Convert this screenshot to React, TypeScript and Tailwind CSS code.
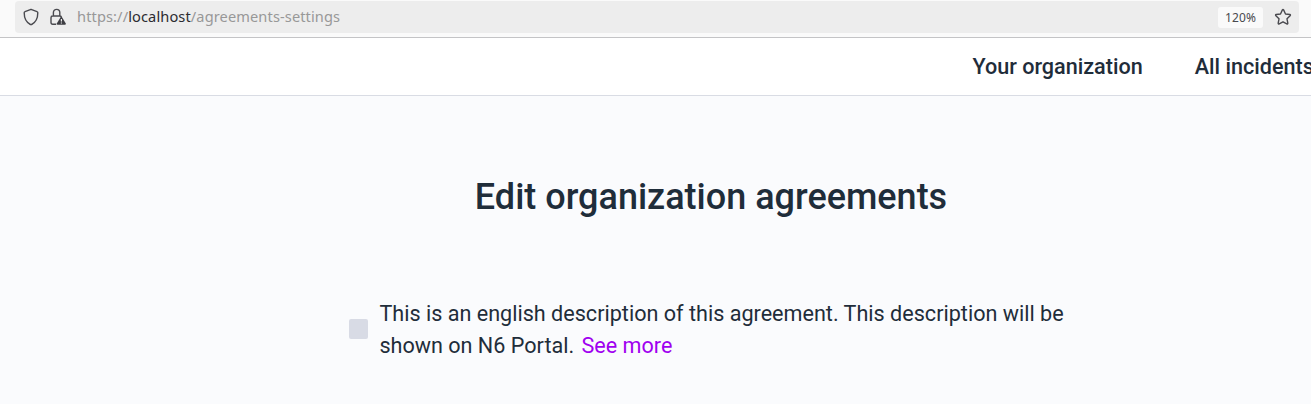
import React from "react";

function ShieldIcon() {
  return (
    <svg width="16" height="18" viewBox="0 0 16 18" fill="none" stroke="#4a4a4f" strokeWidth="1.4" strokeLinejoin="round">
      <path d="M8 1.3 L14 3.6 C14.6 3.8 14.8 4.2 14.8 4.8 C14.8 10.2 12.6 14.5 8.6 16.5 Q8 16.8 7.4 16.5 C3.4 14.5 1.2 10.2 1.2 4.8 C1.2 4.2 1.4 3.8 2 3.6 Z" />
    </svg>
  );
}

function LockWarningIcon() {
  return (
    <svg width="16" height="18" viewBox="0 0 16 18" fill="none">
      <path
        d="M3.4 8 V4.6 a3.2 3.2 0 0 1 6.4 0 V8 M6.2 16.2 H2.7 Q1 16.2 1 14.5 V9.7 Q1 8 2.7 8 H9.8 Q11 8 11.4 9"
        stroke="#4a4a4f"
        strokeWidth="1.4"
      />
      <path
        d="M10.7 9 Q11.3 8.3 11.9 9 L15.8 15.4 Q16 16.8 14.9 16.8 H7.7 Q6.6 16.8 6.8 15.4 Z"
        fill="#3e3e43"
      />
      <path d="M11.4 11 V13.6 M11.4 14.5 V15.6" stroke="#ededed" strokeWidth="1.2" />
    </svg>
  );
}

function StarIcon() {
  return (
    <svg width="18" height="18" viewBox="0 0 18 18" fill="none" stroke="#4a4a4f" strokeWidth="1.4" strokeLinejoin="round">
      <path d="M8.4 1.9 Q9 0.9 9.6 1.9 L11.5 6 L15.8 6.5 Q16.9 6.8 16.1 7.7 L13 10.8 L13.8 15.2 Q13.8 16.4 12.8 15.9 L9 13.8 L5.2 15.9 Q4.2 16.4 4.2 15.2 L5 10.8 L1.9 7.7 Q1.1 6.8 2.2 6.5 L6.5 6 Z" />
    </svg>
  );
}

function AddressBar() {
  return (
    <div className="h-[38px] border-b border-[#c4c4c6] bg-[#fafafa] pt-px pr-3 pl-[15px]">
      <div className="flex h-8 items-center rounded-[4px] bg-[#ededed] pr-[7px] pl-2">
        <ShieldIcon />
        <span className="ml-[11px] flex">
          <LockWarningIcon />
        </span>
        <div className="mb-0.5 ml-[11px] font-['Noto_Sans','Open_Sans',sans-serif] text-[14.6px] leading-[30px] tracking-[0.11px] whitespace-nowrap text-[#989898]">
          https://<span className="text-[#2b2b30]">localhost</span>/agreements-settings
        </div>
        <span className="ml-auto flex h-[21px] w-[45px] items-center justify-center rounded-[3px] bg-[#fafafa] pt-px font-['Noto_Sans','Open_Sans',sans-serif] text-[12px] tracking-[0.1px] text-[#4a4a4f]">
          120%
        </span>
        <span className="ml-[11px] flex">
          <StarIcon />
        </span>
      </div>
    </div>
  );
}

export default function App() {
  return (
    <div className="flex h-[404px] w-full flex-col overflow-hidden bg-[#fafbfd] font-['Roboto',sans-serif] text-[#1f2d3a]">
      <AddressBar />
      <nav className="flex h-[58px] shrink-0 gap-[52px] overflow-hidden border-b border-[#d9dce4] bg-white pl-[972.4px] text-[21.6px] leading-[57px] font-medium whitespace-nowrap">
        <a className="shrink-0">Your organization</a>
        <a className="shrink-0">All incidents</a>
      </nav>
      <main className="pl-[349px]">
        <h1 className="mt-[77px] w-[724px] text-center text-[36px] leading-12 font-medium whitespace-nowrap">
          Edit organization agreements
        </h1>
        <div className="mt-[76px] flex items-start">
          <span className="mt-[22px] h-5 w-[19px] shrink-0 rounded-[2px] bg-[#d8dbe5]" />
          <p className="mt-px ml-[11.4px] text-[21.6px] leading-8 whitespace-nowrap">
            This is an english description of this agreement. This description will be
            <br />
            shown on N6 Portal. <a className="ml-[2px] text-[#a000f0]">See more</a>
          </p>
        </div>
      </main>
    </div>
  );
}
